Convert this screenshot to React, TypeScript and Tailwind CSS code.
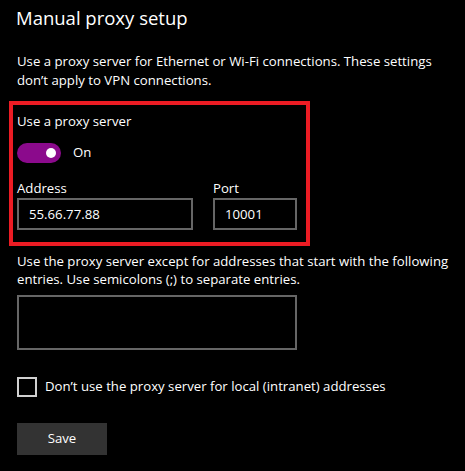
import { useState } from 'react'

const font = { fontFamily: '"Segoe UI", "Open Sans", sans-serif' }

const Toggle = (props: { on: boolean; onChange: (v: boolean) => void }) => {
  return (
    <button
      type="button"
      onClick={() => props.onChange(!props.on)}
      className={`flex h-5 w-11 items-center rounded-full px-[5px] ${props.on ? 'justify-end bg-[#8b0a8c]' : 'justify-start border-2 border-white bg-transparent'}`}
    >
      <span className="h-[10px] w-[10px] rounded-full bg-white" />
    </button>
  )
}

const App = () => {
  const [useProxy, setUseProxy] = useState(true)
  const [address, setAddress] = useState('55.66.77.88')
  const [port, setPort] = useState('10001')
  const [bypassLocal, setBypassLocal] = useState(false)

  return (
    <div className="min-h-screen w-full bg-black text-[13.2px] text-white" style={font}>
      <div className="pt-[4px]">
        <h2 className="pl-4 text-[18.5px] leading-7 font-normal">Manual proxy setup</h2>
        <p className="mt-[20px] max-w-[457px] pl-[17px] leading-[19px]">
          Use a proxy server for Ethernet or Wi-Fi connections. These settings don’t apply to VPN
          connections.
        </p>

        <div className="mt-[11px] ml-[9px] w-[301px] border-4 border-[#ec1c24] px-1 pt-[7px] pb-3">
          <div className="leading-[19px]">Use a proxy server</div>
          <div className="mt-[12px] flex items-center gap-3">
            <Toggle on={useProxy} onChange={setUseProxy} />
            <span>{useProxy ? 'On' : 'Off'}</span>
          </div>
          <div className="mt-[16px] flex gap-5">
            <label className="flex flex-col">
              <span className="leading-[19px]">Address</span>
              <input
                value={address}
                onChange={(e) => setAddress(e.target.value)}
                className="h-8 w-[176px] border-2 border-[#666] bg-black px-[10px] text-[13.2px] text-white outline-none"
              />
            </label>
            <label className="flex flex-col">
              <span className="leading-[19px]">Port</span>
              <input
                value={port}
                onChange={(e) => setPort(e.target.value)}
                className="h-8 w-[84px] border-2 border-[#666] bg-black px-[10px] text-[13.2px] text-white outline-none"
              />
            </label>
          </div>
        </div>

        <p className="mt-[6px] max-w-[457px] pl-[17px] leading-[18px]">
          Use the proxy server except for addresses that start with the following entries. Use
          semicolons (;) to separate entries.
        </p>
        <div className="pl-[17px]">
          <textarea className="mt-[7px] block h-[55px] w-[280px] resize-none border-2 border-[#666] bg-black px-[10px] py-1 text-[13.2px] text-white outline-none" />
        </div>

        <label className="mt-[27px] flex items-center gap-2 pl-[17px]">
          <button
            type="button"
            onClick={() => setBypassLocal(!bypassLocal)}
            className="flex h-5 w-5 items-center justify-center border-2 border-[#d0d0d0]"
          >
            {bypassLocal && <span className="text-[12px] leading-none">✓</span>}
          </button>
          <span>Don’t use the proxy server for local (intranet) addresses</span>
        </label>

        <div className="pl-[17px]">
          <button type="button" className="mt-[26px] h-8 w-[90px] bg-[#333333] text-white">
            Save
          </button>
        </div>
      </div>
    </div>
  )
}

export default App
